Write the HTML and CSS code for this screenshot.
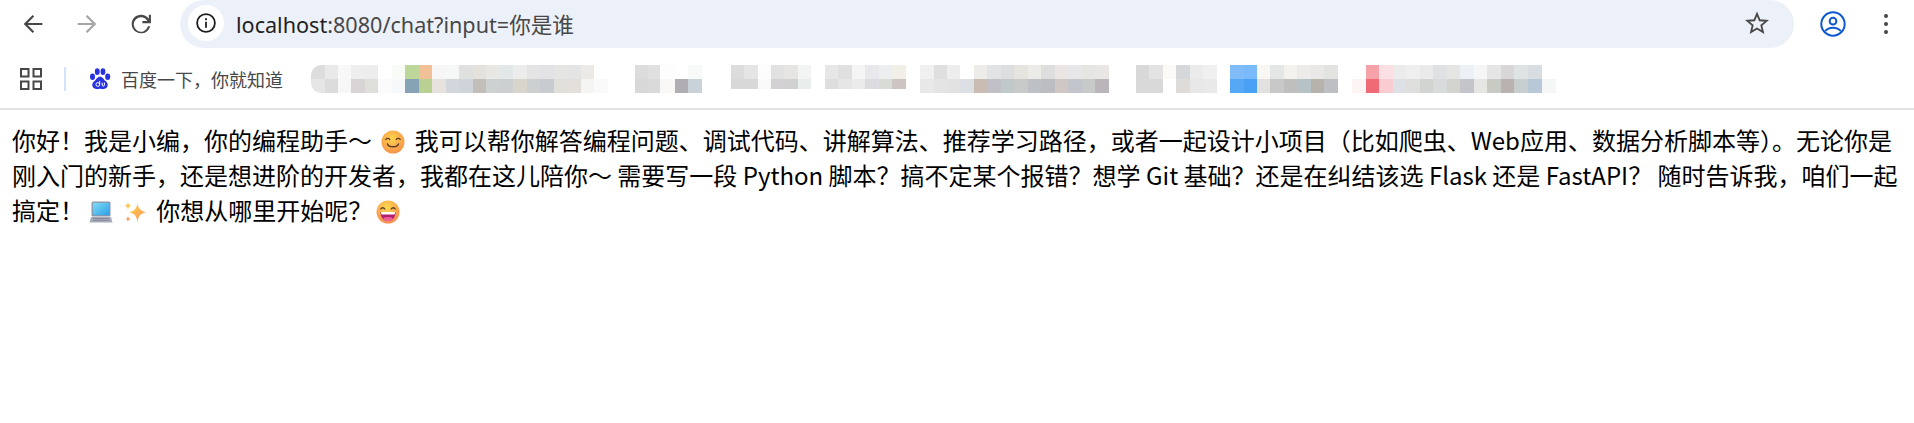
FILE: index.html
```html
<!DOCTYPE html>
<html lang="zh-CN">
<head>
<meta charset="utf-8">
<title>localhost:8080/chat</title>
<link rel="stylesheet" href="styles.css">
</head>
<body>
<header class="chrome">
  <div class="toolbar">
    <div class="nav">
      <svg class="nav-icon" viewBox="0 0 24 24"><path d="M20 11.100H7.500l5.500-5.500L11.700 4.300 4 12l7.700 7.700 1.300-1.300-5.500-5.500H20z"/></svg>
      <svg class="nav-icon off" viewBox="0 0 24 24"><path d="M4 11.100h12.500L11 5.600l1.300-1.300L20 12l-7.700 7.700-1.300-1.300 5.500-5.500H4z"/></svg>
      <svg class="nav-icon" viewBox="0 0 24 24"><path d="M12 20a8 8 0 1 1 6.700-12.400V4h1.800v7.300h-7.300V9.500h4.300A6.200 6.200 0 1 0 18 14h1.900A8 8 0 0 1 12 20z"/></svg>
    </div>
    <div class="omnibox">
      <span class="info">
        <svg class="info-icon" viewBox="0 0 20 20"><circle cx="10" cy="10" r="8.900" fill="none" stroke="#1f1f1f" stroke-width="1.800"/><rect x="9.100" y="8.800" width="1.800" height="6"/><rect x="9.100" y="5.200" width="1.800" height="2"/></svg>
      </span>
      <span class="url"><span class="host">localhost</span>:8080/chat?input=你是谁</span>
      <svg class="star" viewBox="0 0 24 24"><path d="M12 3.600l2.500 5.900 6.400.5-4.900 4.200 1.500 6.200-5.500-3.300-5.500 3.300 1.500-6.200L3.100 10l6.400-.5z" fill="none" stroke="#474747" stroke-width="1.700" stroke-linejoin="miter"/></svg>
    </div>
    <svg class="profile" viewBox="0 0 24 24" fill="none" stroke="#0b57d0" stroke-width="1.800"><circle cx="12" cy="12" r="10.800"/><circle cx="12" cy="9.400" r="3.100"/><path d="M4.700 18.600c1.800-2.300 4.400-3.200 7.300-3.200s5.500.9 7.300 3.200"/></svg>
    <svg class="menu" viewBox="0 0 6 24"><circle cx="3" cy="4" r="2"/><circle cx="3" cy="12" r="2"/><circle cx="3" cy="20" r="2"/></svg>
  </div>
  <div class="bookmarks">
    <svg class="apps" viewBox="0 0 22 22" fill="none" stroke="#474747" stroke-width="2"><rect x="1" y="1" width="7.500" height="7.500"/><rect x="13.500" y="1" width="7.500" height="7.500"/><rect x="1" y="13.500" width="7.500" height="7.500"/><rect x="13.500" y="13.500" width="7.500" height="7.500"/></svg>
    <span class="divider"></span>
    <svg class="paw" viewBox="0 0 20 20" fill="#2932e1"><ellipse cx="3.200" cy="8" rx="2.300" ry="2.900"/><ellipse cx="7.500" cy="3.300" rx="2.200" ry="3"/><ellipse cx="12.700" cy="3.300" rx="2.200" ry="3"/><ellipse cx="17" cy="8" rx="2.300" ry="2.900"/><path d="M10 8c2.500 0 3.200 2.300 4.700 3.600 1.700 1.300 2.600 2.500 2.300 4.400-.4 2.600-2.900 3.400-5 3.200-1-.1-1.500-.3-2-.3s-1 .2-2 .3c-2.100.2-4.700-.6-5-3.200-.3-1.900.6-3.100 2.300-4.400C6.800 10.300 7.500 8 10 8z"/><circle cx="8" cy="15" r="1.700" fill="none" stroke="#fff" stroke-width=".9"/><path d="M9.700 11.700v3.300M12 13.300v2.200c0 1.300 2 1.300 2 0v-2.200" fill="none" stroke="#fff" stroke-width=".9"/></svg>
    <span class="bm-label">百度一下&#xFF0C;你就知道</span>
    <span class="blur blur-a"></span>
    <span class="blur blur-b"></span>
    <span class="blur blur-short blur-c"></span>
    <span class="blur blur-short blur-d"></span>
    <span class="blur blur-e"></span>
    <span class="blur blur-f"></span>
    <span class="blur blur-g"></span>
    <span class="blur blur-h"></span>
  </div>
</header>
<main class="reply">你好&#xFF01;我是小编&#xFF0C;你的编程助手&#xFF5E; <svg class="emoji emoji-wide" viewBox="0 0 24 24"><defs><radialGradient id="face" cx="45%" cy="35%" r="75%"><stop offset="0" stop-color="#ffd34d"/><stop offset="1" stop-color="#f58a4a"/></radialGradient></defs><circle cx="12" cy="12" r="11.500" fill="url(#face)"/><path d="M4.800 9.500c1-1.500 3-1.500 4 0M15.200 9.500c1-1.500 3-1.500 4 0" fill="none" stroke="#5b3a2a" stroke-width="1.300" stroke-linecap="round"/><path d="M6.500 14c1.300 3.700 9.700 3.700 11 0" fill="none" stroke="#5b3a2a" stroke-width="1.400" stroke-linecap="round"/></svg> 我可以帮你解答编程问题、调试代码、讲解算法、推荐学习路径&#xFF0C;或者一起设计小项目&#xFF08;比如爬虫、Web应用、数据分析脚本等&#xFF09;。无论你是刚入门的新手&#xFF0C;还是想进阶的开发者&#xFF0C;我都在这儿陪你&#xFF5E; 需要写一段 Python 脚本&#xFF1F;搞不定某个报错&#xFF1F;想学 Git 基础&#xFF1F;还是在纠结该选 Flask 还是 FastAPI&#xFF1F; 随时告诉我&#xFF0C;咱们一起搞定&#xFF01; <svg class="emoji" viewBox="0 0 24 24"><defs><linearGradient id="screen" x1="0" y1="0" x2="1" y2="1"><stop offset="0" stop-color="#7fdcf5"/><stop offset="1" stop-color="#2f9fe8"/></linearGradient></defs><rect x="2.500" y="1.500" width="19" height="15" rx="1.500" fill="#8d93a6"/><rect x="3.800" y="2.800" width="16.400" height="12.400" fill="url(#screen)"/><path d="M2 17h20l1.500 5.500H.5z" fill="#a8adbb"/><path d="M4 18.500h16M3.500 20.300h17" stroke="#777d90" stroke-width=".8"/></svg> <svg class="emoji emoji-wide" viewBox="0 0 24 24"><defs><linearGradient id="spark" x1="0" y1="0" x2="1" y2="1"><stop offset="0" stop-color="#ffd84a"/><stop offset="1" stop-color="#fb8f5c"/></linearGradient></defs><path d="M14.500 3c1 5.800 3 8 8.500 9.300-5.500 1.300-7.500 3.500-8.500 9.700-1-6.200-3-8.400-8.500-9.700 5.500-1.300 7.500-3.500 8.500-9.300z" fill="url(#spark)"/><path d="M5 2c.5 2.500 1.300 3.300 3.500 3.800C6.300 6.300 5.500 7.200 5 9.700 4.500 7.200 3.700 6.300 1.500 5.800 3.700 5.300 4.500 4.500 5 2z" fill="#ffc94d"/><path d="M5 16c.4 2 1 2.600 2.800 3-1.800.4-2.400 1-2.800 3-.4-2-1-2.600-2.800-3 1.800-.4 2.400-1 2.800-3z" fill="#fb9a63"/></svg> 你想从哪里开始呢&#xFF1F; <svg class="emoji emoji-tight" viewBox="0 0 24 24"><defs><radialGradient id="grin" cx="45%" cy="30%" r="80%"><stop offset="0" stop-color="#ffd94f"/><stop offset="1" stop-color="#f4824f"/></radialGradient></defs><circle cx="12" cy="12" r="11.500" fill="url(#grin)"/><path d="M4.800 9c1-1.700 3-1.700 4 0M15.200 9c1-1.700 3-1.700 4 0" fill="none" stroke="#5b3a2a" stroke-width="1.300" stroke-linecap="round"/><path d="M4.500 12h15c.2 5.500-3.300 9-7.500 9s-7.700-3.500-7.500-9z" fill="#b3206e"/><path d="M5 12h14c0 1.400-.2 2-.5 2.500h-13C5.200 14 5 13.400 5 12z" fill="#fff"/><ellipse cx="12" cy="19" rx="4.500" ry="2" fill="#ef5f9a"/></svg></main>
</body>
</html>
```
FILE: styles.css
```css
* { box-sizing: border-box; }
html, body { margin: 0; padding: 0; background: #fff; }
body { overflow: hidden; }

.chrome {
  height: 110px;
  border-bottom: 2px solid #e3e3e3;
  background: #fff;
}
.toolbar {
  display: flex;
  align-items: center;
  height: 48px;
  padding-left: 19px;
}
.nav {
  display: flex;
  align-items: center;
  gap: 26px;
  width: 161px;
}
.nav-icon { width: 28px; height: 28px; fill: #474747; flex: none; }
.nav-icon.off { fill: #a6a6a6; }
.omnibox {
  display: flex;
  align-items: center;
  width: 1614px;
  height: 48px;
  padding: 0 24px 2px 8px;
  border-radius: 24px;
  background: #ecf0f9;
}
.info {
  display: flex;
  align-items: center;
  justify-content: center;
  width: 36px;
  height: 36px;
  border-radius: 50%;
  background: #fff;
  flex: none;
}
.info-icon { width: 20px; height: 20px; fill: #1f1f1f; }
.url {
  flex: 1;
  margin-left: 12px;
  font: 21.6px "Noto Sans", "Noto Sans CJK SC", sans-serif;
  color: #474747;
}
.host { color: #1f1f1f; }
.star { width: 26px; height: 26px; flex: none; }
.profile { width: 26px; height: 26px; margin-left: 26px; flex: none; }
.menu { width: 6px; height: 24px; margin-left: 37px; fill: #474747; flex: none; }

.bookmarks {
  display: flex;
  align-items: center;
  height: 60px;
  padding: 2px 0 0 20px;
}
.apps { width: 22px; height: 22px; flex: none; }
.divider {
  width: 2px;
  height: 24px;
  margin-left: 22px;
  background: #d3e3fd;
  flex: none;
}
.paw { width: 22px; height: 22px; margin-left: 23px; flex: none; }
.bm-label {
  width: 163px;
  margin-left: 10px;
  font: 18px/24px "Noto Sans CJK SC", sans-serif;
  color: #474747;
  flex: none;
}
.blur {
  display: block;
  height: 28px;
  flex: none;
  background-repeat: no-repeat;
  background-size: 100% 14px;
  background-position: 0 0, 0 14px;
}
.blur-short { background-size: 100% 14px, 100% 10px; }
.blur-a {
  width: 297px;
  margin-left: 27px;
  border-radius: 10px 0 0 10px;
  background-image:
    linear-gradient(90deg, #ddd 0 14px, #e9e9e9 0 27px, #f8f8f8 0 40px, #eee 0 54px, #ededed 0 67px, #fff 0 81px, #f9fbf6 0 94px, #bdd69a 0 108px, #f1c097 0 121px, #f6f6f6 0 135px, #f6f7f7 0 148px, #e0e0e0 0 162px, #e5e1dd 0 175px, #e9e7e4 0 189px, #e2e7e7 0 202px, #ececec 0 216px, #e4e4e4 0 229px, #e3e3e5 0 243px, #e5e5e3 0 256px, #e4e4e4 0 270px, #ece9e6 0 283px, #fff 0 297px),
    linear-gradient(90deg, #e6e6e6 0 14px, #dcdcdc 0 27px, #f7f7f7 0 40px, #d8d3d5 0 54px, #dededa 0 67px, #fbfbfb 0 81px, #f6f8fa 0 94px, #85a3b5 0 108px, #b8d192 0 121px, #e7e2dd 0 135px, #d1d7dd 0 148px, #ced4d9 0 162px, #c2bfbb 0 175px, #ced1d1 0 189px, #ccd0d0 0 202px, #d8d5cd 0 216px, #ccd0d0 0 229px, #c8cbd0 0 243px, #e0dfda 0 256px, #e3dfdb 0 270px, #f5f5f4 0 283px, #fafafa 0 297px);
}
.blur-b {
  width: 67px;
  margin-left: 27px;
  background-image:
    linear-gradient(90deg, #dcdcdc 0 13px, #e0e0e0 0 25px, #fdfdfd 0 40px, #fff 0 53px, #f8faf9 0 67px),
    linear-gradient(90deg, #d8d8d8 0 13px, #dadada 0 25px, #faf8f6 0 40px, #b0aeb4 0 53px, #c8d2d8 0 67px);
}
.blur-c {
  width: 80px;
  margin-left: 29px;
  background-image:
    linear-gradient(90deg, #dcdcdc 0 13px, #e5e5e5 0 27px, #fcfcfc 0 40px, #e1e1e1 0 53px, #e6e5e3 0 67px, #f3f5f5 0 80px),
    linear-gradient(90deg, #d8d8d8 0 27px, #fafafa 0 40px, #d3d1d3 0 53px, #d1d1d1 0 67px, #e9eeed 0 80px);
}
.blur-d {
  width: 81px;
  margin-left: 14px;
  background-image:
    linear-gradient(90deg, #e7e7e7 0 13px, #e0e0e0 0 27px, #f5f5f5 0 40px, #e8e8ec 0 54px, #edeef0 0 67px, #f2eee8 0 81px),
    linear-gradient(90deg, #dedede 0 13px, #e6e6e6 0 27px, #ebebeb 0 40px, #dcdce0 0 54px, #d8dcd6 0 67px, #cdc5c1 0 81px);
}
.blur-e {
  width: 189px;
  margin-left: 14px;
  background-image:
    linear-gradient(90deg, #f0f0f0 0 14px, #dfdfdf 0 27px, #ededed 0 40px, #fff 0 54px, #eeece9 0 67px, #e2e3e5 0 81px, #dcdee0 0 94px, #e7e3de 0 108px, #ecebe8 0 121px, #dedede 0 135px, #e9e6e3 0 148px, #e7e7e9 0 162px, #e5e6e2 0 175px, #eae6e6 0 189px),
    linear-gradient(90deg, #e8e8e8 0 14px, #e4e4e4 0 27px, #e2e2e2 0 40px, #dce0e4 0 54px, #c9bdb3 0 67px, #c0c0c6 0 81px, #c1c8ca 0 94px, #c7cac8 0 108px, #bdc0c4 0 121px, #bcbdc0 0 135px, #cec7c3 0 148px, #c3c5cc 0 162px, #c6cbca 0 175px, #b9b5ba 0 189px);
}
.blur-f {
  width: 81px;
  margin-left: 27px;
  background-image:
    linear-gradient(90deg, #d8d8d8 0 13px, #e3e3e3 0 27px, #fbfaf6 0 40px, #d5d7db 0 54px, #ebebeb 0 67px, #f0f0f0 0 81px),
    linear-gradient(90deg, #d9d9d9 0 27px, #fff 0 40px, #dedbd9 0 54px, #e7e7e7 0 67px, #e9e9e9 0 81px);
}
.blur-g {
  width: 108px;
  margin-left: 13px;
  background-image:
    linear-gradient(90deg, #7fbcf8 0 14px, #7abafa 0 27px, #f8f7f3 0 40px, #e5e6e6 0 54px, #f3f2ef 0 67px, #ecebe9 0 81px, #e9e8e6 0 94px, #e3e3e1 0 108px),
    linear-gradient(90deg, #56a8f6 0 14px, #48a1f5 0 27px, #e2e1df 0 40px, #c8c8c8 0 54px, #bfbfbd 0 67px, #b7c2c7 0 81px, #b8b2ac 0 94px, #bdbfc3 0 108px);
}
.blur-h {
  width: 204px;
  margin-left: 14px;
  background-image:
    linear-gradient(90deg, #fff 0 14px, #f5a2a9 0 27px, #fbe0e3 0 41px, #ebebeb 0 54px, #efefef 0 68px, #eaeaea 0 81px, #e0e1e3 0 95px, #e5e5e3 0 108px, #edf0f5 0 122px, #f6f6f6 0 135px, #e5e5e5 0 149px, #d8d6d7 0 162px, #dee3e3 0 176px, #d8dde1 0 190px, #fff 0 204px),
    linear-gradient(90deg, #fdf5f5 0 14px, #ef6a75 0 27px, #f8ccd0 0 41px, #dde1e5 0 54px, #dededc 0 68px, #d2d4d2 0 81px, #d8dadc 0 95px, #d4d4ce 0 108px, #c4c5cb 0 122px, #e6e6e4 0 135px, #c8cac4 0 149px, #bab1b1 0 162px, #c8cece 0 176px, #b8c8d6 0 190px, #f5f7f7 0 204px);
}

.reply {
  padding: 12px;
  font: 24px "Noto Sans CJK SC", "Noto Sans", sans-serif;
  color: #000;
}
.emoji {
  width: 24px;
  height: 24px;
  vertical-align: -4px;
}
.emoji-wide { margin: 0 4px; }
.emoji-tight { margin-left: -2px; }
```
